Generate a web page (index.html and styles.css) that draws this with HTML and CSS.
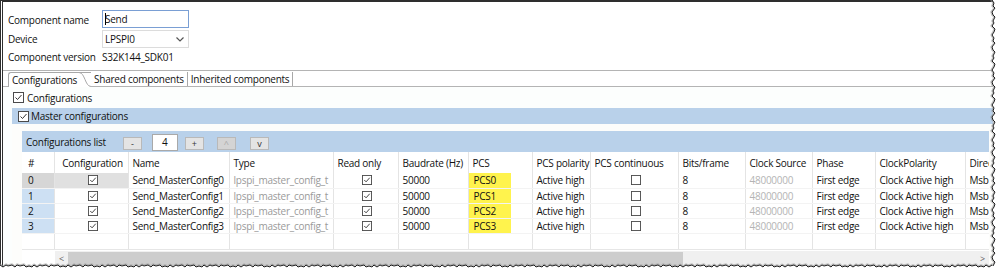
FILE: index.html
```html
<!DOCTYPE html>
<html lang="en">
<head>
  <meta charset="UTF-8">
  <meta name="viewport" content="width=device-width, initial-scale=1.0">
  <title>Component Inspector - Send</title>
  <link rel="stylesheet" href="styles.css">
</head>
<body>
  <div class="shot">
    <div class="window">
      <!-- Component properties -->
      <div class="props">
        <span>Component name</span>
        <div class="textbox"><span class="caret"></span>Send</div>
        <span>Device</span>
        <div class="combo">LPSPI0<svg class="chevron" viewBox="0 0 8 5"><path d="M0.5 0.5 4 4 7.5 0.5"/></svg></div>
        <span>Component version</span>
        <span>S32K144_SDK01</span>
      </div>

      <div class="folder">
        <div class="tabs">
          <div class="tab tab-active"><span>Configurations</span><svg class="tab-curve" viewBox="0 0 12 15" preserveAspectRatio="none"><path d="M0 0.5C6 0.5 6 14.5 12 14.5"/></svg></div>
          <div class="tab">Shared components</div>
          <div class="tab">Inherited components</div>
        </div>

        <div class="tab-body">
          <div class="check-row">
            <svg class="cb" viewBox="0 0 11 11"><rect x="0.5" y="0.5" width="10" height="10"/><path d="M2.5 5.5l2 2 4-4.5"/></svg>
            <span>Configurations</span>
          </div>

          <div class="group">
            <div class="group-head">
              <svg class="cb" viewBox="0 0 11 11"><rect x="0.5" y="0.5" width="10" height="10"/><path d="M2.5 5.5l2 2 4-4.5"/></svg>
              <span>Master configurations</span>
            </div>
            <div class="group-body">
              <div class="list">
                <div class="list-bar">
                  <span>Configurations list</span>
                  <div class="bar-btn btn-minus">-</div>
                  <div class="count">4</div>
                  <div class="bar-btn btn-plus">+</div>
                  <div class="bar-btn btn-up disabled">^</div>
                  <div class="bar-btn btn-down">v</div>
                </div>

                <div class="grid">
                  <table>
                    <colgroup>
                      <col class="c-num"><col class="c-conf"><col class="c-name"><col class="c-type">
                      <col class="c-ro"><col class="c-baud"><col class="c-pcs"><col class="c-pol">
                      <col class="c-cont"><col class="c-bits"><col class="c-clk"><col class="c-phase">
                      <col class="c-cpol"><col class="c-dir">
                    </colgroup>
                    <thead>
                      <tr>
                        <th class="num">#</th>
                        <th class="center">Configuration</th>
                        <th>Name</th>
                        <th>Type</th>
                        <th>Read only</th>
                        <th>Baudrate (Hz)</th>
                        <th>PCS</th>
                        <th>PCS polarity</th>
                        <th>PCS continuous</th>
                        <th>Bits/frame</th>
                        <th>Clock Source</th>
                        <th>Phase</th>
                        <th>ClockPolarity</th>
                        <th>Direction</th>
                      </tr>
                    </thead>
                    <tbody>
                      <tr class="current">
                        <td class="num">0</td>
                        <td class="center conf"><svg class="cb" viewBox="0 0 11 11"><rect x="0.5" y="0.5" width="10" height="10"/><path d="M2.5 5.5l2 2 4-4.5"/></svg></td>
                        <td>Send_MasterConfig0</td>
                        <td class="muted">lpspi_master_config_t</td>
                        <td class="center"><svg class="cb" viewBox="0 0 11 11"><rect x="0.5" y="0.5" width="10" height="10"/><path d="M2.5 5.5l2 2 4-4.5"/></svg></td>
                        <td>50000</td>
                        <td class="pcs"><div class="mark">PCS0</div></td>
                        <td>Active high</td>
                        <td class="center"><svg class="cb" viewBox="0 0 11 11"><rect x="0.5" y="0.5" width="10" height="10"/></svg></td>
                        <td>8</td>
                        <td class="faint">48000000</td>
                        <td>First edge</td>
                        <td>Clock Active high</td>
                        <td>Msb first</td>
                      </tr>
                      <tr>
                        <td class="num">1</td>
                        <td class="center"><svg class="cb" viewBox="0 0 11 11"><rect x="0.5" y="0.5" width="10" height="10"/><path d="M2.5 5.5l2 2 4-4.5"/></svg></td>
                        <td>Send_MasterConfig1</td>
                        <td class="muted">lpspi_master_config_t</td>
                        <td class="center"><svg class="cb" viewBox="0 0 11 11"><rect x="0.5" y="0.5" width="10" height="10"/><path d="M2.5 5.5l2 2 4-4.5"/></svg></td>
                        <td>50000</td>
                        <td class="pcs"><div class="mark">PCS1</div></td>
                        <td>Active high</td>
                        <td class="center"><svg class="cb" viewBox="0 0 11 11"><rect x="0.5" y="0.5" width="10" height="10"/></svg></td>
                        <td>8</td>
                        <td class="faint">48000000</td>
                        <td>First edge</td>
                        <td>Clock Active high</td>
                        <td>Msb first</td>
                      </tr>
                      <tr>
                        <td class="num">2</td>
                        <td class="center"><svg class="cb" viewBox="0 0 11 11"><rect x="0.5" y="0.5" width="10" height="10"/><path d="M2.5 5.5l2 2 4-4.5"/></svg></td>
                        <td>Send_MasterConfig2</td>
                        <td class="muted">lpspi_master_config_t</td>
                        <td class="center"><svg class="cb" viewBox="0 0 11 11"><rect x="0.5" y="0.5" width="10" height="10"/><path d="M2.5 5.5l2 2 4-4.5"/></svg></td>
                        <td>50000</td>
                        <td class="pcs"><div class="mark">PCS2</div></td>
                        <td>Active high</td>
                        <td class="center"><svg class="cb" viewBox="0 0 11 11"><rect x="0.5" y="0.5" width="10" height="10"/></svg></td>
                        <td>8</td>
                        <td class="faint">48000000</td>
                        <td>First edge</td>
                        <td>Clock Active high</td>
                        <td>Msb first</td>
                      </tr>
                      <tr>
                        <td class="num">3</td>
                        <td class="center"><svg class="cb" viewBox="0 0 11 11"><rect x="0.5" y="0.5" width="10" height="10"/><path d="M2.5 5.5l2 2 4-4.5"/></svg></td>
                        <td>Send_MasterConfig3</td>
                        <td class="muted">lpspi_master_config_t</td>
                        <td class="center"><svg class="cb" viewBox="0 0 11 11"><rect x="0.5" y="0.5" width="10" height="10"/><path d="M2.5 5.5l2 2 4-4.5"/></svg></td>
                        <td>50000</td>
                        <td class="pcs"><div class="mark">PCS3</div></td>
                        <td>Active high</td>
                        <td class="center"><svg class="cb" viewBox="0 0 11 11"><rect x="0.5" y="0.5" width="10" height="10"/></svg></td>
                        <td>8</td>
                        <td class="faint">48000000</td>
                        <td>First edge</td>
                        <td>Clock Active high</td>
                        <td>Msb first</td>
                      </tr>
                      <tr class="empty">
                        <td></td><td></td><td></td><td></td><td></td><td></td><td></td>
                        <td></td><td></td><td></td><td></td><td></td><td></td><td></td>
                      </tr>
                    </tbody>
                  </table>
                </div>

                <!-- Horizontal scrollbar (row header column stays fixed) -->
                <div class="hscroll">
                  <div class="hscroll-gap"></div>
                  <div class="hscroll-track">
                    <span class="arrow">&lt;</span>
                    <div class="thumb"></div>
                    <span class="arrow arrow-right">&gt;</span>
                  </div>
                </div>
              </div>
            </div>
          </div>
        </div>
      </div>
    </div>

    <!-- Torn paper edge of the screenshot -->
    <svg class="torn" width="999" height="271" viewBox="0 0 999 271">
      <defs>
        <pattern id="tear-right" x="988" y="0" width="11" height="35" patternUnits="userSpaceOnUse">
          <path class="tear-fill" d="M4 0l2 3-1 3 2 2-3 4 1 3 2 2-2 4 1 2-2 3 3 3-1 3-2 3H11V0Z"/>
          <path class="tear-shade" d="M3 0l2 3-1 3 2 2-3 4 1 3 2 2-2 4 1 2-2 3 3 3-1 3-2 3"/>
          <path class="tear-line" d="M4 0l2 3-1 3 2 2-3 4 1 3 2 2-2 4 1 2-2 3 3 3-1 3-2 3"/>
        </pattern>
        <pattern id="tear-bottom" x="0" y="261" width="34" height="10" patternUnits="userSpaceOnUse">
          <path class="tear-fill" d="M0 4l3 2 3-2 2 1 4-1 3 2 2-2 3 1 4-1 2 2 3-1 3 1 2-2V10H0Z"/>
          <path class="tear-shade" d="M0 3l3 2 3-2 2 1 4-1 3 2 2-2 3 1 4-1 2 2 3-1 3 1 2-2"/>
          <path class="tear-line" d="M0 4l3 2 3-2 2 1 4-1 3 2 2-2 3 1 4-1 2 2 3-1 3 1 2-2"/>
        </pattern>
      </defs>
      <rect x="988" y="0" width="11" height="266" fill="url(#tear-right)"/>
      <rect x="0" y="261" width="992" height="10" fill="url(#tear-bottom)"/>
    </svg>
  </div>
</body>
</html>
```

FILE: styles.css
```css
* {
  box-sizing: border-box;
}

body {
  margin: 0;
  background: #fff;
  font-family: "Open Sans", "Noto Sans", sans-serif;
  font-size: 10px;
  letter-spacing: -0.25px;
  color: #111;
}

.shot {
  position: relative;
  width: 999px;
  height: 271px;
  overflow: hidden;
}

.window {
  width: 993px;
  height: 271px;
  border-top: 2px solid #2e2e2e;
  border-left: 3px double #2e2e2e;
  overflow: hidden;
}

/* Component properties */
.props {
  display: grid;
  grid-template-columns: 94px 87px;
  grid-template-rows: 19px 19px 18px;
  align-items: center;
  padding: 8px 0 4px 5px;
}

.textbox {
  align-self: start;
  display: flex;
  align-items: center;
  height: 18px;
  padding-left: 2px;
  border: 1px solid #7a9fd4;
}

.caret {
  width: 1px;
  height: 12px;
  margin-right: -1px;
  background: #000;
}

.combo {
  align-self: end;
  display: flex;
  align-items: center;
  justify-content: space-between;
  height: 18px;
  padding: 0 4px 0 2px;
  border: 1px solid #dcdcdc;
}

.chevron {
  width: 8px;
  height: 5px;
  fill: none;
  stroke: #555;
  stroke-width: 1.2;
}

/* Tab folder */
.folder {
  border-top: 1px solid #b4b4b4;
}

.tabs {
  display: flex;
  height: 15px;
  margin-top: 1px;
  padding-left: 5px;
  border-bottom: 1px solid #b4b4b4;
}

.tab {
  padding: 0 3px;
  line-height: 14px;
  border-right: 1px solid #a8a8a8;
}

.tab-active {
  display: flex;
  padding: 0 0 0 3px;
  margin-bottom: -1px;
  border: 1px solid #a8a8a8;
  border-width: 1px 0 0 1px;
  border-radius: 3px 0 0 0;
  background: #fff;
}

.tab-active span {
  padding-right: 2px;
}

.tab-curve {
  width: 12px;
  height: 15px;
  margin-top: -1px;
  fill: none;
  stroke: #a8a8a8;
  stroke-width: 1;
}

.tab-body {
  padding-left: 9px;
  background: #fcfefd;
}

.cb {
  flex: none;
  width: 11px;
  height: 11px;
  fill: #fff;
  stroke: #4a4a4a;
  stroke-width: 1;
}

.cb path {
  fill: none;
  stroke: #333;
}

.check-row {
  display: flex;
  align-items: center;
  gap: 3px;
  height: 21px;
  padding-left: 1px;
}

/* Master configurations group */
.group-head {
  display: flex;
  align-items: center;
  gap: 2px;
  height: 16px;
  padding-left: 6px;
  background: #b9d1ea;
}

.group-body {
  padding: 7px 0 0 10px;
  background: #fdfdfb;
}

.list {
  margin-right: 4px;
  background: #fff;
}

.list-bar {
  display: flex;
  align-items: center;
  height: 21px;
  padding-left: 4px;
  background: #b9d1ea;
}

.bar-btn {
  width: 19px;
  height: 13px;
  margin-top: 4px;
  border: 1px solid #b9b9b9;
  background: #e4e4e4;
  font-size: 9px;
  line-height: 11px;
  text-align: center;
  color: #333;
}

.bar-btn.disabled {
  background: #d4d4d4;
  color: #a8a8a8;
}

.btn-minus { margin-left: 17px; }
.btn-plus { margin-left: 7px; }
.btn-up { margin-left: 13px; }
.btn-down { margin-left: 14px; }

.count {
  width: 26px;
  height: 17px;
  margin: 2px 0 0 10px;
  border: 1px solid #a9a9a9;
  background: #fff;
  line-height: 15px;
  text-align: center;
}

/* Configurations table */
.grid {
  overflow: hidden;
}

table {
  width: 1003px;
  border-collapse: collapse;
  table-layout: fixed;
}

.c-num { width: 32px; }
.c-conf { width: 74px; }
.c-name { width: 101px; }
.c-type { width: 104px; }
.c-ro { width: 65px; }
.c-baud { width: 70px; }
.c-pcs { width: 64px; }
.c-pol { width: 58px; }
.c-cont { width: 88px; }
.c-bits { width: 67px; }
.c-clk { width: 67px; }
.c-phase { width: 63px; }
.c-cpol { width: 90px; }
.c-dir { width: 60px; }

th,
td {
  padding: 0 1px 0 4px;
  border-right: 1px solid #e4e4e4;
  white-space: nowrap;
  overflow: hidden;
  text-align: left;
  font-weight: normal;
}

th {
  height: 21px;
}

td {
  height: 15px;
  line-height: 14px;
  border-bottom: 1px solid #f3f3f3;
}

th.num,
td.num {
  padding-left: 6px;
}

.center {
  text-align: center;
}

td.center .cb {
  display: block;
  margin: 0 auto;
  width: 10px;
  height: 10px;
}

td.num {
  background: #cde0f3;
}

.current td.num {
  background: #d6d6d6;
}

.current td.conf {
  background: #e0e0e0;
}

.muted {
  color: #9a9a9a;
}

.faint {
  color: #b4b4b4;
}

td.pcs {
  padding: 0;
}

.mark {
  width: 42px;
  height: 15px;
  margin-bottom: -1px;
  padding-left: 5px;
  background: #fff34d;
}

.empty td {
  height: 16px;
  border-bottom: 1px solid #e6e6e6;
}

/* Horizontal scrollbar */
.hscroll {
  display: flex;
  height: 15px;
  margin-top: 1px;
}

.hscroll-gap {
  width: 33px;
}

.hscroll-track {
  flex: 1;
  display: flex;
  align-items: center;
  background: #f0f0f0;
}

.arrow {
  width: 13px;
  font-size: 9px;
  text-align: center;
  color: #606060;
}

.thumb {
  width: 615px;
  height: 13px;
  background: #cdcdcd;
}

.arrow-right {
  margin-left: auto;
}

/* Torn edge overlay */
.torn {
  position: absolute;
  top: 0;
  left: 0;
  pointer-events: none;
}

.tear-fill {
  fill: #fff;
}

.tear-line {
  fill: none;
  stroke: #1e1e1e;
  stroke-width: 1;
}

.tear-shade {
  fill: none;
  stroke: #9a9a9a;
  stroke-width: 1.5;
  opacity: 0.6;
}
```
